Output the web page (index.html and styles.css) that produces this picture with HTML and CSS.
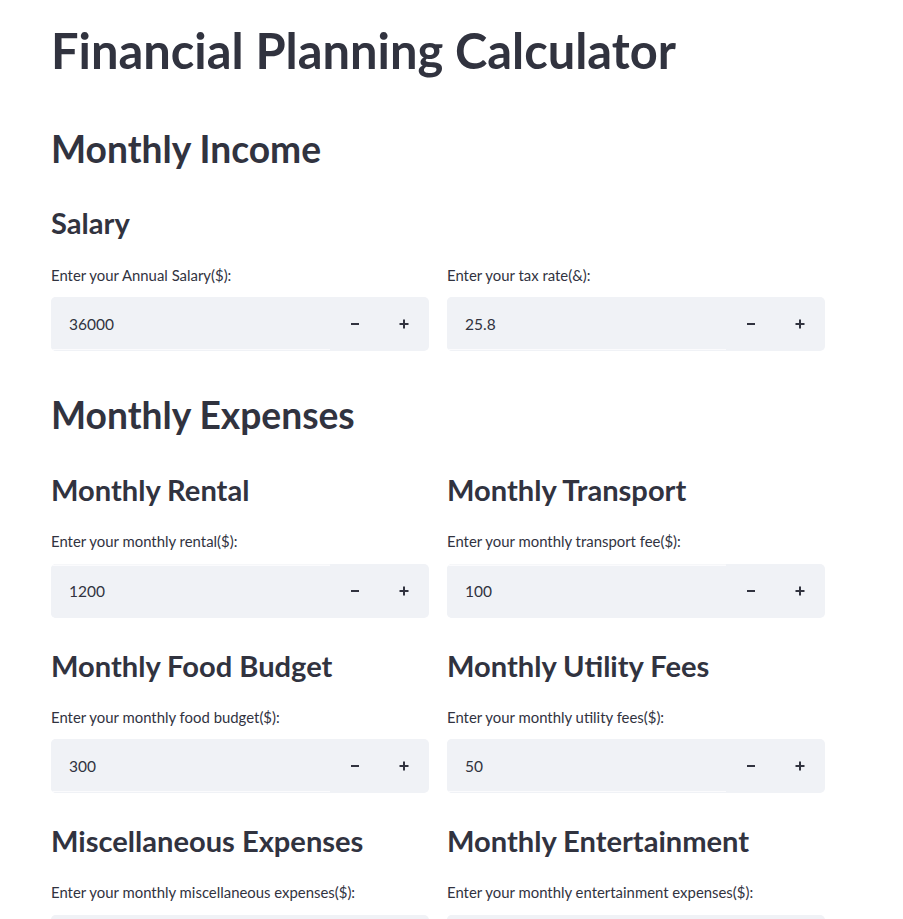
FILE: index.html
```html
<!DOCTYPE html>
<html lang="en">
<head>
<meta charset="utf-8">
<title>Financial Planning Calculator</title>
<link rel="stylesheet" href="styles.css">
</head>
<body>
<main class="page">
  <h1 class="title">Financial Planning Calculator</h1>

  <h2 class="section section-income">Monthly Income</h2>
  <h3 class="sub sub-salary">Salary</h3>
  <div class="grid">
    <div class="field">
      <label class="label">Enter your Annual Salary($):</label>
      <div class="numinput">
        <div class="num line-bottom">36000</div>
        <div class="step"><svg width="10" height="10" viewBox="0 0 10 10"><rect x="1" y="4" width="8" height="2" fill="#31333F"/></svg></div>
        <div class="step"><svg width="10" height="10" viewBox="0 0 10 10"><rect x="0.5" y="4" width="9" height="2" fill="#31333F"/><rect x="4" y="0.5" width="2" height="9" fill="#31333F"/></svg></div>
      </div>
    </div>
    <div class="field">
      <label class="label">Enter your tax rate(&amp;):</label>
      <div class="numinput">
        <div class="num line-bottom">25.8</div>
        <div class="step"><svg width="10" height="10" viewBox="0 0 10 10"><rect x="1" y="4" width="8" height="2" fill="#31333F"/></svg></div>
        <div class="step"><svg width="10" height="10" viewBox="0 0 10 10"><rect x="0.5" y="4" width="9" height="2" fill="#31333F"/><rect x="4" y="0.5" width="2" height="9" fill="#31333F"/></svg></div>
      </div>
    </div>
  </div>

  <h2 class="section section-expenses">Monthly Expenses</h2>
  <div class="grid grid-expenses">
    <div class="cell">
      <h3 class="sub">Monthly Rental</h3>
      <label class="label">Enter your monthly rental($):</label>
      <div class="numinput">
        <div class="num line-top">1200</div>
        <div class="step"><svg width="10" height="10" viewBox="0 0 10 10"><rect x="1" y="4" width="8" height="2" fill="#31333F"/></svg></div>
        <div class="step"><svg width="10" height="10" viewBox="0 0 10 10"><rect x="0.5" y="4" width="9" height="2" fill="#31333F"/><rect x="4" y="0.5" width="2" height="9" fill="#31333F"/></svg></div>
      </div>
    </div>
    <div class="cell">
      <h3 class="sub">Monthly Transport</h3>
      <label class="label">Enter your monthly transport fee($):</label>
      <div class="numinput">
        <div class="num line-top">100</div>
        <div class="step"><svg width="10" height="10" viewBox="0 0 10 10"><rect x="1" y="4" width="8" height="2" fill="#31333F"/></svg></div>
        <div class="step"><svg width="10" height="10" viewBox="0 0 10 10"><rect x="0.5" y="4" width="9" height="2" fill="#31333F"/><rect x="4" y="0.5" width="2" height="9" fill="#31333F"/></svg></div>
      </div>
    </div>
    <div class="cell">
      <h3 class="sub">Monthly Food Budget</h3>
      <label class="label">Enter your monthly food budget($):</label>
      <div class="numinput">
        <div class="num line-bottom">300</div>
        <div class="step"><svg width="10" height="10" viewBox="0 0 10 10"><rect x="1" y="4" width="8" height="2" fill="#31333F"/></svg></div>
        <div class="step"><svg width="10" height="10" viewBox="0 0 10 10"><rect x="0.5" y="4" width="9" height="2" fill="#31333F"/><rect x="4" y="0.5" width="2" height="9" fill="#31333F"/></svg></div>
      </div>
    </div>
    <div class="cell">
      <h3 class="sub">Monthly Utility Fees</h3>
      <label class="label">Enter your monthly utility fees($):</label>
      <div class="numinput">
        <div class="num line-bottom">50</div>
        <div class="step"><svg width="10" height="10" viewBox="0 0 10 10"><rect x="1" y="4" width="8" height="2" fill="#31333F"/></svg></div>
        <div class="step"><svg width="10" height="10" viewBox="0 0 10 10"><rect x="0.5" y="4" width="9" height="2" fill="#31333F"/><rect x="4" y="0.5" width="2" height="9" fill="#31333F"/></svg></div>
      </div>
    </div>
    <div class="cell">
      <h3 class="sub">Miscellaneous Expenses</h3>
      <label class="label">Enter your monthly miscellaneous expenses($):</label>
      <div class="numinput">
        <div class="num line-bottom"></div>
        <div class="step"><svg width="10" height="10" viewBox="0 0 10 10"><rect x="1" y="4" width="8" height="2" fill="#31333F"/></svg></div>
        <div class="step"><svg width="10" height="10" viewBox="0 0 10 10"><rect x="0.5" y="4" width="9" height="2" fill="#31333F"/><rect x="4" y="0.5" width="2" height="9" fill="#31333F"/></svg></div>
      </div>
    </div>
    <div class="cell">
      <h3 class="sub">Monthly Entertainment</h3>
      <label class="label">Enter your monthly entertainment expenses($):</label>
      <div class="numinput">
        <div class="num line-bottom"></div>
        <div class="step"><svg width="10" height="10" viewBox="0 0 10 10"><rect x="1" y="4" width="8" height="2" fill="#31333F"/></svg></div>
        <div class="step"><svg width="10" height="10" viewBox="0 0 10 10"><rect x="0.5" y="4" width="9" height="2" fill="#31333F"/><rect x="4" y="0.5" width="2" height="9" fill="#31333F"/></svg></div>
      </div>
    </div>
  </div>
</main>
</body>
</html>
```

FILE: styles.css
```css
html, body {
  margin: 0;
  padding: 0;
  background: #ffffff;
}

body {
  font-family: "Lato", "Source Sans Pro", "Liberation Sans", sans-serif;
  color: #31333F;
  overflow: hidden;
}

.page {
  display: flex;
  flex-direction: column;
  width: 774px;
  padding: 21px 0 0 51px;
}

.title {
  margin: 0;
  font-size: 48.8px;
  font-weight: 700;
  line-height: 1.2;
}

.section {
  margin: 0;
  font-size: 37.2px;
  font-weight: 700;
  line-height: 45px;
}

.section-income {
  margin-top: 46px;
  margin-bottom: 32px;
}

.section-expenses {
  margin-top: 41px;
  margin-bottom: 33px;
}

.sub {
  margin: 1px 0 25px 0;
  font-size: 29.1px;
  font-weight: 700;
  line-height: 37.2px;
  white-space: nowrap;
}

.sub-salary {
  margin-bottom: 26px;
}

.grid {
  display: grid;
  grid-template-columns: 378px 378px;
  column-gap: 18px;
}

.grid-expenses {
  row-gap: 28px;
}

.field, .cell {
  display: flex;
  flex-direction: column;
}

.label {
  display: block;
  font-size: 14.9px;
  font-weight: 400;
  line-height: 1.2;
  margin-bottom: 12.5px;
  white-space: nowrap;
}

.numinput {
  display: flex;
  height: 54px;
  border-radius: 5px;
  background: #F0F2F6;
  overflow: hidden;
}

.num {
  flex: 1;
  display: flex;
  align-items: center;
  padding-left: 18px;
  font-size: 15.5px;
  font-weight: 400;
  color: #31333F;
}

.line-bottom {
  background: linear-gradient(to top, #F0F2F6 0 1px, #fbfbfd 1px 2px, #F0F2F6 2px);
}

.line-top {
  background: linear-gradient(to bottom, #f6f7f9 0 1px, #fbfbfd 1px 2px, #F0F2F6 2px);
}

.step {
  width: 49.5px;
  display: flex;
  align-items: center;
  justify-content: center;
}

.step svg {
  display: block;
}
```
